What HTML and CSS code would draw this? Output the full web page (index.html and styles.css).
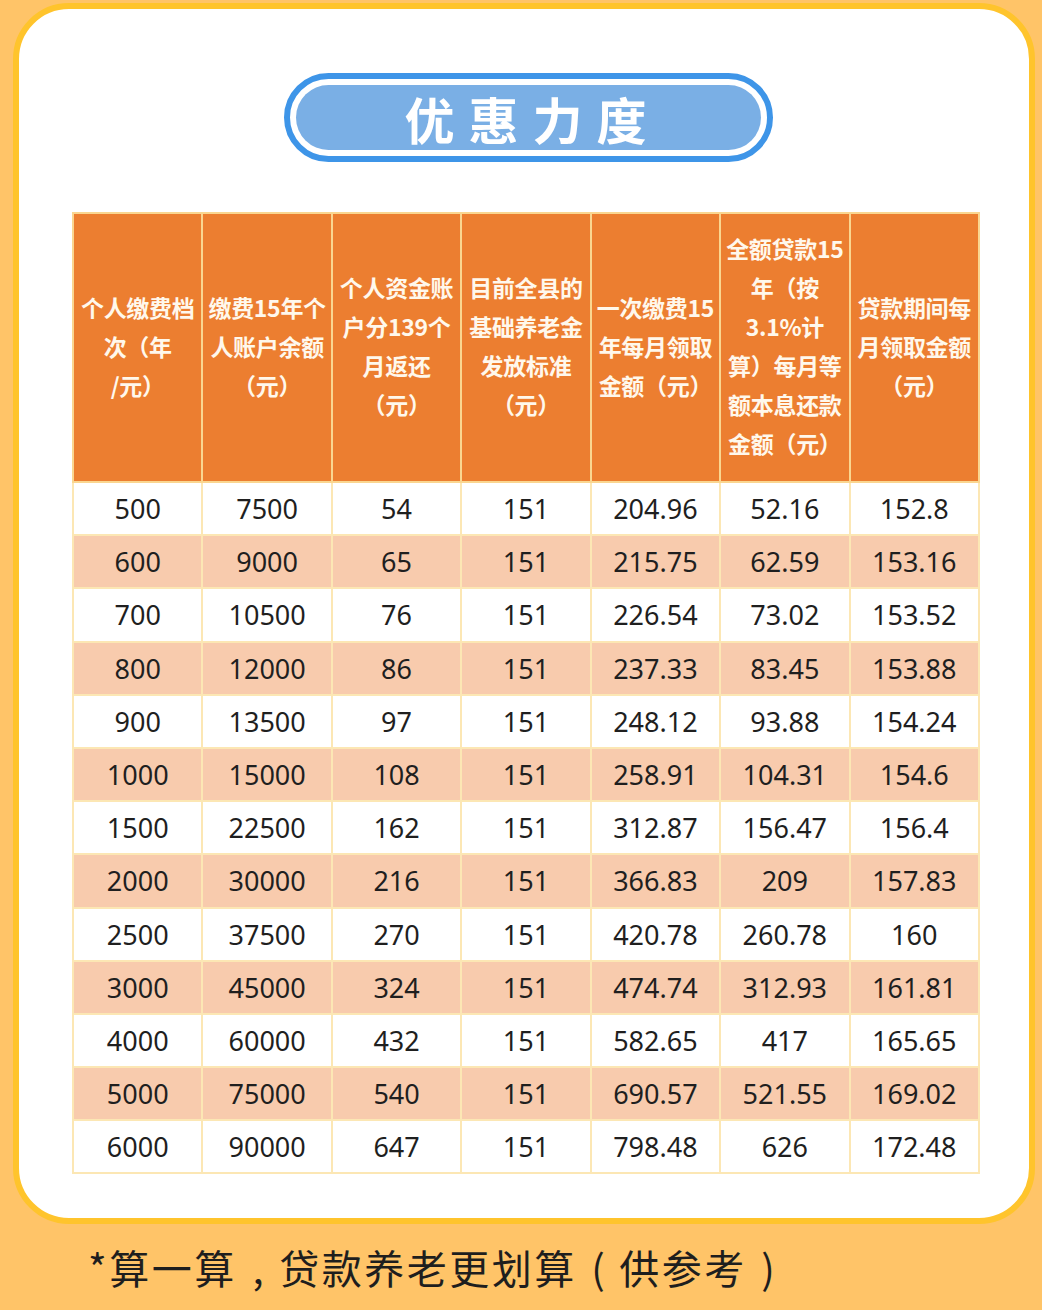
FILE: index.html
```html
<!DOCTYPE html>
<html lang="zh-CN">
<head>
<meta charset="utf-8">
<title>优惠力度</title>
<link rel="stylesheet" href="styles.css">
</head>
<body>
<div class="card">
  <div class="pill"><div class="pill-inner"><span class="pill-text">优惠力度</span></div></div>
  <table class="grid">
    <colgroup>
      <col><col><col><col><col><col><col>
    </colgroup>
    <thead>
      <tr>
        <th>个人缴费档<br>次（年<br>/元）</th>
        <th>缴费15年个<br>人账户余额<br>（元）</th>
        <th>个人资金账<br>户分139个<br>月返还<br>（元）</th>
        <th>目前全县的<br>基础养老金<br>发放标准<br>（元）</th>
        <th>一次缴费15<br>年每月领取<br>金额（元）</th>
        <th>全额贷款15<br>年（按<br>3.1%计<br>算）每月等<br>额本息还款<br>金额（元）</th>
        <th>贷款期间每<br>月领取金额<br>（元）</th>
      </tr>
    </thead>
    <tbody>
      <tr><td>500</td><td>7500</td><td>54</td><td>151</td><td>204.96</td><td>52.16</td><td>152.8</td></tr>
      <tr><td>600</td><td>9000</td><td>65</td><td>151</td><td>215.75</td><td>62.59</td><td>153.16</td></tr>
      <tr><td>700</td><td>10500</td><td>76</td><td>151</td><td>226.54</td><td>73.02</td><td>153.52</td></tr>
      <tr><td>800</td><td>12000</td><td>86</td><td>151</td><td>237.33</td><td>83.45</td><td>153.88</td></tr>
      <tr><td>900</td><td>13500</td><td>97</td><td>151</td><td>248.12</td><td>93.88</td><td>154.24</td></tr>
      <tr><td>1000</td><td>15000</td><td>108</td><td>151</td><td>258.91</td><td>104.31</td><td>154.6</td></tr>
      <tr><td>1500</td><td>22500</td><td>162</td><td>151</td><td>312.87</td><td>156.47</td><td>156.4</td></tr>
      <tr><td>2000</td><td>30000</td><td>216</td><td>151</td><td>366.83</td><td>209</td><td>157.83</td></tr>
      <tr><td>2500</td><td>37500</td><td>270</td><td>151</td><td>420.78</td><td>260.78</td><td>160</td></tr>
      <tr><td>3000</td><td>45000</td><td>324</td><td>151</td><td>474.74</td><td>312.93</td><td>161.81</td></tr>
      <tr><td>4000</td><td>60000</td><td>432</td><td>151</td><td>582.65</td><td>417</td><td>165.65</td></tr>
      <tr><td>5000</td><td>75000</td><td>540</td><td>151</td><td>690.57</td><td>521.55</td><td>169.02</td></tr>
      <tr><td>6000</td><td>90000</td><td>647</td><td>151</td><td>798.48</td><td>626</td><td>172.48</td></tr>
    </tbody>
  </table>
</div>
<p class="note">*算一算<span class="punct">,</span>贷款养老更划算<span class="punct">(</span>供参考<span class="punct">)</span></p>
</body>
</html>
```

FILE: styles.css
```css
html, body {
  margin: 0;
  padding: 0;
}
body {
  background: #FFC468;
  width: 1042px;
  height: 1310px;
  overflow: hidden;
  font-family: "Noto Sans", "Noto Sans CJK SC", sans-serif;
  padding-top: 3px;
  box-sizing: border-box;
}
.card {
  box-sizing: border-box;
  margin-left: 13px;
  width: 1022px;
  height: 1221px;
  background: #fff;
  border: 6px solid #FFC42C;
  border-radius: 56px;
  padding-top: 64px;
}
.pill {
  box-sizing: border-box;
  margin-left: 265px;
  width: 489px;
  height: 89px;
  background: #fff;
  border: 6px solid #3E95E8;
  border-radius: 46px;
  padding: 6px;
}
.pill-inner {
  height: 100%;
  background: #7AAFE5;
  border-radius: 36px;
  display: flex;
  align-items: center;
  justify-content: center;
}
.pill-text {
  color: #fff;
  font-family: "Noto Sans CJK SC", sans-serif;
  font-weight: 700;
  font-size: 50px;
  line-height: 1;
  letter-spacing: 14px;
  margin-left: 8px;
}
.grid {
  margin-top: 50px;
  margin-left: 53px;
  width: 908px;
  table-layout: fixed;
  border-collapse: collapse;
  border: 2px solid #F8C74E;
}
.grid th {
  background: #EC7E30;
  color: #FFF8EC;
  font-family: "Noto Sans CJK SC", sans-serif;
  font-weight: 700;
  font-size: 23px;
  line-height: 39px;
  height: 264px;
  padding: 0 0 3px 0;
  letter-spacing: -0.3px;
  border: 2px solid #FAD690;
  white-space: nowrap;
  text-align: center;
  vertical-align: middle;
}
.grid td {
  height: 53.2px;
  padding: 0;
  text-align: center;
  vertical-align: middle;
  font-size: 27px;
  color: #1F1F1F;
  border: 2px solid #FCE7B4;
  box-sizing: border-box;
}
.grid tbody tr:nth-child(even) td {
  background: #F8CBAD;
}
.grid tbody tr:nth-child(odd) td {
  background: #FFFFFF;
}
.note {
  margin: 16px 0 0 88px;
  font-family: "Noto Sans CJK SC", sans-serif;
  font-size: 40px;
  letter-spacing: 2.5px;
  line-height: 54px;
  color: #1E1E1E;
  white-space: nowrap;
}
.punct {
  display: inline-block;
  width: 42.5px;
  text-align: center;
  letter-spacing: 0;
}
```
